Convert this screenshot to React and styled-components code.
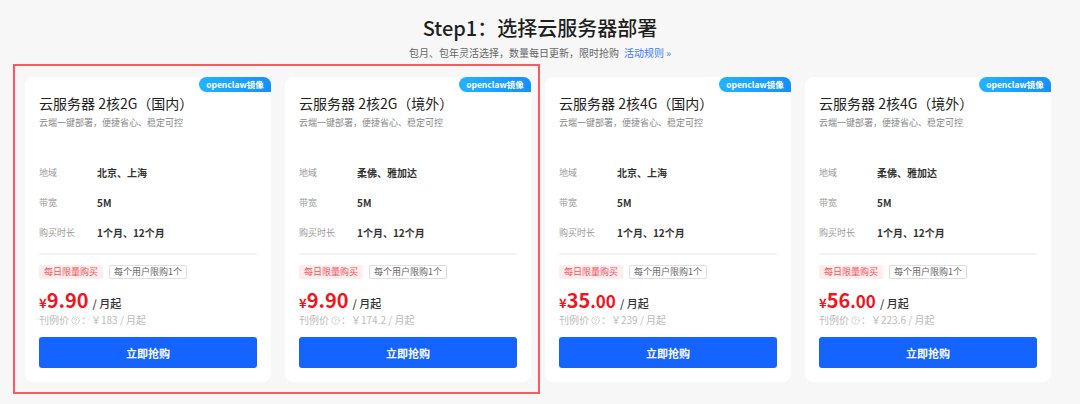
import styled, { createGlobalStyle } from "styled-components";
import { CircleHelp } from "lucide-react";

const GlobalStyle = createGlobalStyle`
    body {
        margin: 0;
        background: #f7f7f7;
        font-family: "Noto Sans CJK SC", "Noto Sans", sans-serif;
    }
`;

const Page = styled.div`
    width: 1080px;
    height: 404px;
    overflow: hidden;
`;

const Header = styled.div`
    padding-top: 14px;
    text-align: center;
    h1 {
        margin: 0;
        font-size: 20px;
        line-height: 28px;
        font-weight: 500;
        color: #1f1f1f;
    }
    p {
        margin: 4px 0 0;
        font-size: 10px;
        line-height: 14px;
        color: #666;
    }
    a {
        margin-left: 5px;
        color: #3d7bff;
        text-decoration: none;
    }
`;

const CardGrid = styled.div`
    position: relative;
    display: grid;
    grid-template-columns: repeat(4, 246px);
    gap: 14px;
    margin: 17px 0 0 25px;
    width: max-content;
`;

const Highlight = styled.div`
    position: absolute;
    left: -12px;
    top: -13px;
    bottom: -12px;
    width: 527px;
    border: 2.5px solid #fa5a5f;
    box-sizing: border-box;
    pointer-events: none;
`;

const Card = styled.div`
    position: relative;
    background: #fff;
    border-radius: 8px;
    padding: 16px 14px 14px;
    display: flex;
    flex-direction: column;
`;

const Badge = styled.div`
    position: absolute;
    top: 0;
    right: 0;
    width: 72px;
    height: 15px;
    border-radius: 8px 8px 0 8px;
    background: linear-gradient(90deg, #22b4ff, #1490ff);
    color: #fff;
    font-size: 8.5px;
    font-weight: 700;
    line-height: 15px;
    text-align: center;
`;

const Title = styled.div`
    font-size: 14px;
    line-height: 20px;
    color: #222;
`;

const Desc = styled.div`
    margin-top: 3px;
    font-size: 9px;
    line-height: 14px;
    color: #888;
`;

const Specs = styled.div`
    margin-top: 34px;
    display: flex;
    flex-direction: column;
    gap: 14px;
`;

const SpecRow = styled.div`
    display: flex;
    align-items: center;
    height: 16px;
    span {
        width: 58px;
        font-size: 9px;
        color: #999;
    }
    b {
        font-size: 10px;
        font-weight: 600;
        color: #333;
    }
`;

const Divider = styled.div`
    margin-top: 13px;
    height: 2px;
    background: #f2f3f5;
`;

const Tags = styled.div`
    margin-top: 10px;
    display: flex;
    gap: 6px;
`;

const Tag = styled.span`
    height: 14px;
    box-sizing: border-box;
    padding: 0 4px;
    border-radius: 2px;
    font-size: 9px;
    line-height: 12px;
    border: 1px solid ${(props) => (props.hot ? "#ffecec" : "#dcdfe6")};
    background: ${(props) => (props.hot ? "#ffecec" : "#fff")};
    color: ${(props) => (props.hot ? "#f2545b" : "#666")};
`;

const Price = styled.div`
    margin-top: 10px;
    height: 22px;
    line-height: 22px;
    display: flex;
    align-items: baseline;
    color: #f5141e;
    font-weight: 700;
    .cur {
        font-size: 13px;
    }
    .int {
        font-size: ${(props) => props.intSize}px;
    }
    .dec {
        font-size: ${(props) => props.decSize}px;
    }
    .unit {
        margin-left: 4px;
        font-size: 11px;
        font-weight: 500;
        color: #333;
    }
`;

const ListPrice = styled.div`
    margin-top: 2px;
    display: flex;
    align-items: center;
    font-size: 10px;
    line-height: 14px;
    color: #bbb;
    svg {
        margin: 0 1px 0 2px;
    }
`;

const BuyButton = styled.button`
    margin-top: 10px;
    height: 31px;
    border: none;
    border-radius: 3px;
    background: #1664ff;
    color: #fff;
    font-family: inherit;
    font-size: 11px;
    font-weight: 700;
    cursor: pointer;
`;

const servers = [
    { name: "云服务器 2核2G（国内）", region: "北京、上海", int: "9", dec: ".90", intSize: 20, decSize: 20, list: "183" },
    { name: "云服务器 2核2G（境外）", region: "柔佛、雅加达", int: "9", dec: ".90", intSize: 20, decSize: 20, list: "174.2" },
    { name: "云服务器 2核4G（国内）", region: "北京、上海", int: "35", dec: ".00", intSize: 20, decSize: 17, list: "239" },
    { name: "云服务器 2核4G（境外）", region: "柔佛、雅加达", int: "56", dec: ".00", intSize: 20, decSize: 17, list: "223.6" },
];

const ServerCard = ({ item }) => (
    <Card>
        <Badge>openclaw镜像</Badge>
        <Title>{item.name}</Title>
        <Desc>云端一键部署，便捷省心、稳定可控</Desc>
        <Specs>
            <SpecRow><span>地域</span><b>{item.region}</b></SpecRow>
            <SpecRow><span>带宽</span><b>5M</b></SpecRow>
            <SpecRow><span>购买时长</span><b>1个月、12个月</b></SpecRow>
        </Specs>
        <Divider />
        <Tags>
            <Tag hot>每日限量购买</Tag>
            <Tag>每个用户限购1个</Tag>
        </Tags>
        <Price intSize={item.intSize} decSize={item.decSize}>
            <span className="cur">¥</span>
            <span className="int">{item.int}</span>
            <span className="dec">{item.dec}</span>
            <span className="unit">/ 月起</span>
        </Price>
        <ListPrice>
            刊例价<CircleHelp size={9} strokeWidth={1.6} />：￥{item.list} / 月起
        </ListPrice>
        <BuyButton>立即抢购</BuyButton>
    </Card>
);

const App = () => {
    return (
        <Page>
            <GlobalStyle />
            <Header>
                <h1>Step1：选择云服务器部署</h1>
                <p>
                    包月、包年灵活选择，数量每日更新，限时抢购
                    <a href="#rules">活动规则 »</a>
                </p>
            </Header>
            <CardGrid>
                {servers.map((item) => (
                    <ServerCard key={item.name} item={item} />
                ))}
                <Highlight />
            </CardGrid>
        </Page>
    );
};

export default App;
